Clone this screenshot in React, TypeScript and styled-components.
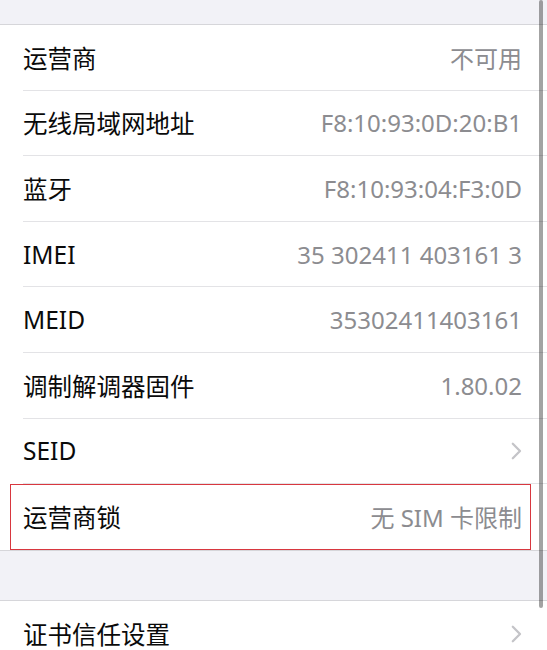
import React from 'react';
import styled, { createGlobalStyle } from 'styled-components';

const GlobalStyle = createGlobalStyle`
  html, body {
    margin: 0;
    padding: 0;
    overflow: hidden;
    background: #f2f2f7;
  }
  body {
    font-family: "Noto Sans", "Noto Sans CJK SC", sans-serif;
    -webkit-font-smoothing: antialiased;
  }
`;

type Item = { label: string; value?: string; link?: boolean; highlighted?: boolean };

const items: Item[] = [
    { label: '运营商', value: '不可用' },
    { label: '无线局域网地址', value: 'F8:10:93:0D:20:B1' },
    { label: '蓝牙', value: 'F8:10:93:04:F3:0D' },
    { label: 'IMEI', value: '35 302411 403161 3' },
    { label: 'MEID', value: '35302411403161' },
    { label: '调制解调器固件', value: '1.80.02' },
    { label: 'SEID', link: true },
    { label: '运营商锁', value: '无 SIM 卡限制', highlighted: true },
];

const Chevron = () => (
    <svg width="11" height="18" viewBox="0 0 11 18" fill="none">
        <polyline
            points="1.8,1.8 9,9 1.8,16.2"
            stroke="#c4c4c8"
            strokeWidth="2.3"
            strokeLinecap="round"
            strokeLinejoin="round"
        />
    </svg>
);

const App = () => {
    return (
        <>
            <GlobalStyle />
            <Screen>
                <TopGap />
                <Group>
                    {items.map((item, i) => (
                        <Row key={item.label} highlighted={item.highlighted}>
                            <RowInner last={i === items.length - 1}>
                                <Label>{item.label}</Label>
                                {item.value && <Value>{item.value}</Value>}
                                {item.link && <Chevron />}
                            </RowInner>
                        </Row>
                    ))}
                </Group>
                <SectionGap />
                <Group>
                    <Row>
                        <RowInner last>
                            <Label>证书信任设置</Label>
                            <Chevron />
                        </RowInner>
                    </Row>
                </Group>
                <ScrollIndicator />
            </Screen>
        </>
    );
};

const Screen = styled.div`
  position: relative;
  width: 547px;
  height: 650px;
  overflow: hidden;
  background: #f2f2f7;
`;

const TopGap = styled.div`
  height: 24px;
`;

const SectionGap = styled.div`
  height: 49px;
`;

const Group = styled.div`
  background: #ffffff;
  border-top: 1px solid #d6d6da;
  border-bottom: 1px solid #d6d6da;
`;

const Row = styled.div<{ highlighted?: boolean }>`
  position: relative;
  height: 65.6px;
  padding-left: 23px;
  box-sizing: border-box;

  ${({ highlighted }) =>
        highlighted &&
        `
    &::after {
      content: '';
      position: absolute;
      left: 10px;
      right: 16px;
      top: 0;
      bottom: 0;
      border: 1.5px solid #d8373f;
      pointer-events: none;
    }
  `}
`;

const RowInner = styled.div<{ last?: boolean }>`
  display: flex;
  align-items: center;
  justify-content: space-between;
  height: 100%;
  padding-right: 25px;
  box-sizing: border-box;
  border-bottom: ${({ last }) => (last ? 'none' : '1px solid #e3e3e6')};
`;

const Label = styled.span`
  font-size: 24.5px;
  color: #0a0a0a;
  white-space: nowrap;
`;

const Value = styled.span`
  font-size: 24px;
  color: #8c8c90;
  white-space: nowrap;
`;

const ScrollIndicator = styled.div`
  position: absolute;
  top: 0;
  right: 4px;
  width: 4.5px;
  height: 608px;
  border-radius: 3px;
  background: rgba(0, 0, 0, 0.36);
`;

export default App;
